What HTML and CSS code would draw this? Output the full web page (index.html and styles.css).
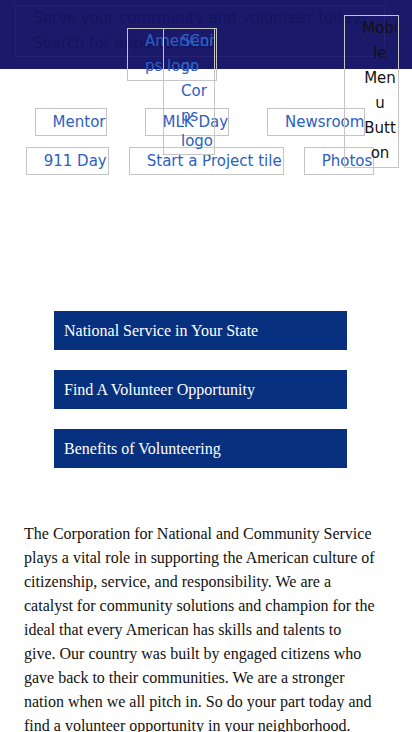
FILE: index.html
```html
<!DOCTYPE html>
<html lang="en">
<head>
<meta charset="utf-8">
<title>National Service</title>
<link rel="stylesheet" href="styles.css">
</head>
<body>
<header class="topbar">
  <div class="search">Serve your community and volunteer today.<br>Search for opportunities</div>
</header>
<div class="logo logo-ac">AmeriCorps logo</div>
<div class="logo logo-sc">Senior Corps logo</div>
<div class="menu-btn">Mobile Menu Button</div>
<nav class="links">
  <div class="row row-top">
    <a class="tile" href="#">Mentor</a>
    <a class="tile" href="#">MLK Day</a>
    <a class="tile" href="#">Newsroom</a>
  </div>
  <div class="row row-bottom">
    <a class="tile" href="#">911 Day</a>
    <a class="tile" href="#">Start a Project tile</a>
    <a class="tile" href="#">Photos</a>
  </div>
</nav>
<section class="actions">
  <a class="action" href="#">National Service in Your State</a>
  <a class="action" href="#">Find A Volunteer Opportunity</a>
  <a class="action" href="#">Benefits of Volunteering</a>
</section>
<p class="intro">The Corporation for National and Community Service plays a vital role in supporting the American culture of citizenship, service, and responsibility. We are a catalyst for community solutions and champion for the ideal that every American has skills and talents to give. Our country was built by engaged citizens who gave back to their communities. We are a stronger nation when we all pitch in. So do your part today and find a volunteer opportunity in your neighborhood.</p>
</body>
</html>
```
FILE: styles.css
```css
html, body {
  margin: 0;
  padding: 0;
  background: #ffffff;
}
body {
  position: relative;
  font-family: "DejaVu Sans", Verdana, sans-serif;
  font-size: 15px;
  overflow: hidden;
}
.topbar {
  height: 69px;
  background: #1b1a6a;
  padding: 5px 0 0 15px;
  box-sizing: border-box;
}
.search {
  width: 370px;
  height: 52px;
  box-sizing: border-box;
  border: 1px solid #232275;
  padding-left: 17px;
  line-height: 25px;
  color: #141360;
  white-space: nowrap;
}
.logo, .menu-btn {
  position: absolute;
  box-sizing: border-box;
  border: 1px solid #c4c4c4;
  padding-left: 17px;
  line-height: 25px;
  overflow-wrap: anywhere;
}
.logo {
  color: #2c60c2;
  top: 28px;
}
.logo-ac {
  left: 127px;
  width: 90px;
  height: 53px;
}
.logo-sc {
  left: 163px;
  width: 52px;
  height: 127px;
}
.menu-btn {
  left: 344px;
  top: 15px;
  width: 55px;
  height: 153px;
  color: #111111;
  text-align: center;
  overflow: hidden;
}
.links {
  width: 400px;
  margin-top: 39px;
  display: flex;
  flex-direction: column;
  gap: 11px;
}
.row {
  display: flex;
  justify-content: center;
}
.row-top { gap: 38px; }
.row-bottom { gap: 20px; }
.row-bottom .tile { padding-right: 1px; }
.tile {
  display: block;
  height: 28px;
  box-sizing: border-box;
  border: 1px solid #c4c4c4;
  padding-left: 17px;
  line-height: 26px;
  color: #2c60c2;
  text-decoration: none;
  white-space: nowrap;
}
.actions {
  margin: 136px 0 0 54px;
  width: 293px;
  display: flex;
  flex-direction: column;
  gap: 20px;
}
.action {
  display: block;
  height: 39px;
  line-height: 39px;
  padding-left: 10px;
  background: #07307f;
  color: #ffffff;
  font-family: "Liberation Serif", "Times New Roman", serif;
  font-size: 16px;
  text-decoration: none;
}
.intro {
  margin: 54px 0 0 24px;
  padding: 0;
  width: 352.6px;
  font-family: "Liberation Serif", "Times New Roman", serif;
  font-size: 16px;
  line-height: 24px;
  color: #111111;
}
```
